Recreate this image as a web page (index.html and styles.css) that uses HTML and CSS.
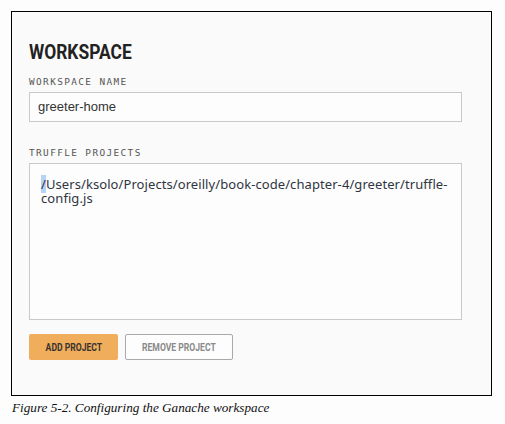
FILE: index.html
```html
<!DOCTYPE html>
<html>
<head>
<meta charset="utf-8">
<link rel="stylesheet" href="styles.css">
</head>
<body>
<div class="figure">
  <div class="panel">
    <h1 class="title"><span class="narrow">WORKSPACE</span></h1>
    <div class="label">WORKSPACE NAME</div>
    <div class="input">greeter-home</div>
    <div class="label label-projects">TRUFFLE PROJECTS</div>
    <div class="textarea"><span class="sel">/</span>Users/ksolo/Projects/oreilly/book-code/chapter-4/greeter/truffle-<br>config.js</div>
    <div class="buttons">
      <div class="btn btn-add"><span class="btn-text">ADD PROJECT</span></div>
      <div class="btn btn-remove"><span class="btn-text">REMOVE PROJECT</span></div>
    </div>
  </div>
</div>
<p class="caption">Figure 5-2. Configuring the Ganache workspace</p>
</body>
</html>
```

FILE: styles.css
```css
html, body {
  margin: 0;
  padding: 0;
  background: #fdfdfd;
}
.figure {
  margin: 11px 0 0 11px;
  width: 479px;
  height: 383px;
  border: 1px solid #000;
  background: #fafafa;
}
.panel {
  padding: 28px 0 0 17px;
}
.title {
  margin: 0;
  font-family: Roboto, "Liberation Sans", sans-serif;
  font-weight: 700;
  font-size: 20px;
  line-height: 24px;
  color: #222;
}
.narrow {
  display: inline-block;
  transform: scaleX(0.87);
  transform-origin: left center;
}
.label {
  margin-top: 12px;
  font-family: "DejaVu Sans Mono", monospace;
  font-size: 9.4px;
  line-height: 12px;
  letter-spacing: 1.4px;
  color: #555;
}
.label-projects {
  margin-top: 25px;
}
.input {
  margin-top: 4px;
  width: 423px;
  height: 28px;
  border: 1px solid #c9c9c9;
  background: #fdfdfd;
  padding-left: 8px;
  font-family: "Liberation Sans", Arial, sans-serif;
  font-size: 13px;
  line-height: 28px;
  color: #333;
}
.textarea {
  margin-top: 4px;
  width: 420px;
  height: 142px;
  border: 1px solid #c9c9c9;
  background: #fdfdfd;
  padding: 13px 0 0 11px;
  font-family: "Noto Sans", "Open Sans", sans-serif;
  font-size: 13px;
  line-height: 14px;
  letter-spacing: 0.08px;
  color: #2f3541;
}
.sel {
  background: #b4d3f5;
}
.buttons {
  display: flex;
  gap: 7px;
  margin-top: 14px;
}
.btn {
  height: 26px;
  box-sizing: border-box;
  display: flex;
  align-items: center;
  justify-content: center;
  font-family: Roboto, "Liberation Sans", sans-serif;
  font-weight: 700;
  font-size: 10px;
  border-radius: 2px;
}
.btn-text {
  display: inline-block;
  transform: scaleX(0.86);
}
.btn-add {
  width: 89px;
  background: #f0ad5c;
  color: #3a3430;
}
.btn-remove {
  width: 108px;
  border: 1px solid #a9a9a9;
  background: #fdfdfd;
  color: #8a8a8a;
}
.caption {
  margin: 4px 0 0 12px;
  font-family: "Liberation Serif", "Times New Roman", serif;
  font-style: italic;
  font-size: 13.2px;
  color: #111;
}
```
